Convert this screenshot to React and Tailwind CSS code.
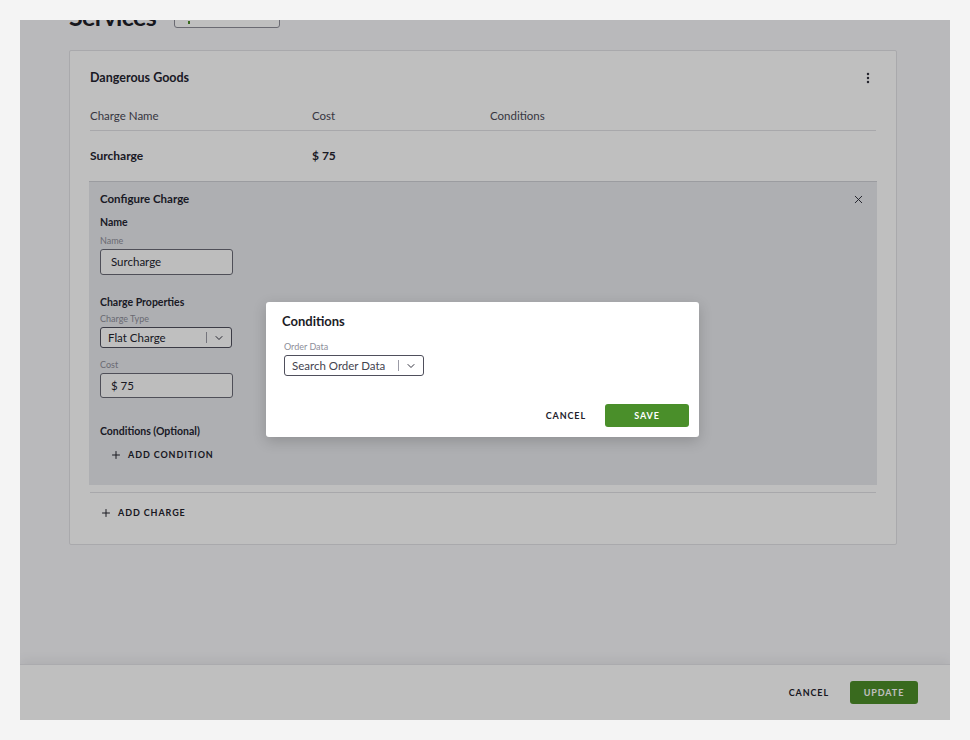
import React from 'react';
import { ChevronDown, EllipsisVertical, Plus, X } from 'lucide-react';

const SelectBox = ({ value, className, muted }) => (
  <div
    className={`flex items-center rounded-[3px] border border-[#4f4f5c] bg-white ${className}`}
  >
    <span
      className={`flex-1 truncate pl-[7px] text-[11.5px] leading-[14px] ${muted ? 'text-[#44444f]' : 'text-[#23232e]'}`}
    >
      {value}
    </span>
    <span className="h-[11px] w-px bg-[#9b9ba6]" />
    <ChevronDown size={12} strokeWidth={2} className="mx-[6px] text-[#33333f]" />
  </div>
);

const TextInput = ({ value, className }) => (
  <div
    className={`flex w-[133px] items-center rounded-[3px] border border-[#6a6a76] bg-[#fdfdfd] pl-[10px] text-[11.5px] text-[#23232e] ${className}`}
  >
    {value}
  </div>
);

const FieldLabel = ({ children, className = '' }) => (
  <div className={`h-[12px] text-[9px] leading-[12px] text-[#8e8e99] ${className}`}>{children}</div>
);

const LinkButton = ({ label, className = '' }) => (
  <button
    type="button"
    className={`flex h-[14px] items-center gap-[6px] text-[9px] font-bold uppercase tracking-[0.1em] text-[#22222c] ${className}`}
  >
    <Plus size={12} strokeWidth={2} />
    {label}
  </button>
);

export default function App() {
  return (
    <div className="min-h-[740px] w-full bg-[#f4f4f4] pt-[20px] font-[Lato,sans-serif]">
      <div className="relative ml-[20px] flex h-[700px] w-[930px] flex-col overflow-hidden bg-[#f7f7fa]">
        <div className="flex-1 overflow-hidden">
          <div className="-mt-[24px] ml-[49px] flex h-[40px] items-center gap-[18px]">
            <h1 className="text-[25px] font-bold leading-none tracking-tight text-[#1f1f29]">Services</h1>
            <div className="relative -mt-[2px] h-[26px] w-[106px] rounded-[3px] border border-[#8e8e99] bg-white">
              <span className="absolute left-[13px] top-[18px] h-[3px] w-[2px] bg-[#4d8e29]" />
            </div>
          </div>

          <div className="ml-[49px] mt-[14px] w-[828px] rounded-[2px] border border-[#e2e2e6] bg-white px-[20px] pb-[24px] pt-[17px] text-[#252531]">
            <div className="flex h-[20px] items-center justify-between">
              <h2 className="text-[12.5px] font-bold">Dangerous Goods</h2>
              <EllipsisVertical size={14} strokeWidth={2.25} className="mr-[1px] text-[#33333f]" />
            </div>

            <div className="mt-[13px] flex h-[30px] items-center border-b border-[#e0e0e4] text-[11.5px] text-[#4a4a56]">
              <span className="w-[222px]">Charge Name</span>
              <span className="w-[178px]">Cost</span>
              <span>Conditions</span>
            </div>

            <div className="flex h-[50px] items-center text-[12px] font-bold">
              <span className="w-[222px]">Surcharge</span>
              <span>$ 75</span>
            </div>

            <div className="-mx-px border-t border-[#cfd0d6] bg-[#e8eaee] pb-[23px] pl-[11px] pr-[12px] pt-[9px]">
              <div className="flex h-[16px] items-center justify-between">
                <h3 className="text-[11.5px] font-bold">Configure Charge</h3>
                <X size={13} strokeWidth={1.75} className="text-[#2b2b37]" />
              </div>

              <div className="mt-[8px] h-[14px] text-[10.5px] font-bold leading-[14px]">Name</div>
              <FieldLabel className="mt-[6px]">Name</FieldLabel>
              <TextInput value="Surcharge" className="mt-[2px] h-[26px]" />

              <div className="mt-[20px] h-[14px] text-[10.5px] font-bold leading-[14px]">Charge Properties</div>
              <FieldLabel className="mt-[4px]">Charge Type</FieldLabel>
              <SelectBox value="Flat Charge" className="mt-[2px] h-[21px] w-[132px] bg-[#fbfbfc]" />

              <FieldLabel className="mt-[11px]">Cost</FieldLabel>
              <TextInput value="$ 75" className="mt-[2px] h-[25px]" />

              <div className="mt-[26px] h-[14px] text-[10.5px] font-bold leading-[14px]">Conditions (Optional)</div>
              <LinkButton label="Add Condition" className="ml-[10px] mt-[10px]" />
            </div>

            <div className="mt-[7px] border-t border-[#e0e0e4] pt-[13px]">
              <LinkButton label="Add Charge" className="ml-[10px]" />
            </div>
          </div>
        </div>

        <div className="flex h-[56px] shrink-0 items-center justify-end gap-[21px] border-t border-[#e4e4e8] bg-white pr-[32px] shadow-[0_-5px_10px_rgba(0,0,0,0.05)]">
          <button type="button" className="text-[9px] font-bold uppercase tracking-[0.1em] text-[#22222c]">
            Cancel
          </button>
          <button
            type="button"
            className="h-[23px] w-[68px] rounded-[3px] bg-[#4d8e29] text-[9px] font-bold uppercase tracking-[0.1em] text-white"
          >
            Update
          </button>
        </div>

        <div className="absolute inset-0 flex items-center justify-center bg-black/25 pb-[1px] pr-[5px]">
          <div className="w-[433px] rounded-[3px] bg-white px-[16px] pb-[10px] pt-[10px] shadow-[0_4px_14px_rgba(0,0,0,0.18)]">
            <h3 className="h-[18px] text-[13px] font-bold leading-[18px] text-[#1c1c26]">Conditions</h3>
            <FieldLabel className="ml-[2px] mt-[11px] text-[#6e6e79]">Order Data</FieldLabel>
            <SelectBox value="Search Order Data" muted className="ml-[2px] mt-[2px] h-[21px] w-[140px]" />
            <div className="mt-[28px] flex items-center justify-end gap-[19px]">
              <button type="button" className="text-[9px] font-bold uppercase tracking-[0.1em] text-[#22222c]">
                Cancel
              </button>
              <button
                type="button"
                className="-mr-[6px] h-[23px] w-[84px] rounded-[3px] bg-[#4a8f2a] text-[9px] font-bold uppercase tracking-[0.1em] text-white"
              >
                Save
              </button>
            </div>
          </div>
        </div>
      </div>
    </div>
  );
}
